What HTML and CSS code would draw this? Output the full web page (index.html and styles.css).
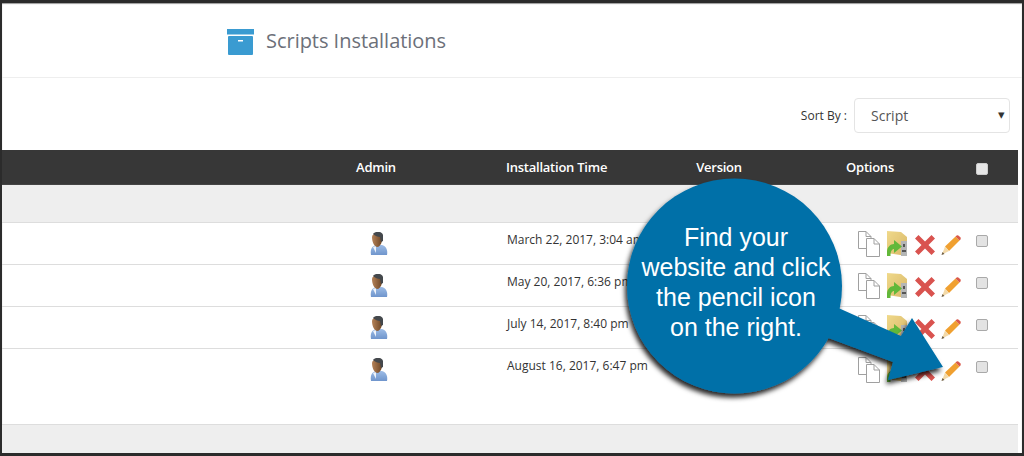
FILE: index.html
```html
<!DOCTYPE html>
<html lang="en">
<head>
<meta charset="utf-8">
<title>Scripts Installations</title>
<link rel="stylesheet" href="styles.css">
</head>
<body>
<svg class="defs" width="0" height="0" aria-hidden="true">
  <defs>
    <linearGradient id="fold" x1="0" y1="0" x2="1" y2="1"><stop offset="0" stop-color="#f0d98a"/><stop offset="1" stop-color="#d8b768"/></linearGradient>
    <linearGradient id="shirt" x1="0" y1="0" x2="0" y2="1"><stop offset="0" stop-color="#9dbce6"/><stop offset="1" stop-color="#6f95cc"/></linearGradient>
    <linearGradient id="face" x1="0" y1="0" x2="1" y2="0"><stop offset="0" stop-color="#b58258"/><stop offset="1" stop-color="#6d4626"/></linearGradient>
    <symbol id="i-user" viewBox="0 0 18 24">
      <path d="M1 23 C0 17 2 14 6 13 L12 13 C16 14 18 18 17 23 Z" fill="url(#shirt)"/>
      <path d="M3 15 L6 14 L6 21 Z" fill="#eef3fa"/>
      <path d="M2 5 C2 1 10 0 11 5 L12 9 C11 13 9 15 7 15 C4 14 2 10 2 5 Z" fill="url(#face)"/>
      <path d="M3 2 C5 -1 12 -1 13 3 L13 9 L11 10 L10 5 C8 5 5 4 3 2 Z" fill="#44484c"/>
    </symbol>
    <symbol id="i-copy" viewBox="0 0 22 26">
      <path d="M.5.5 H8 L13 5.5 V17.5 H.5 Z" fill="#fff" stroke="#a0a0a0"/>
      <path d="M8.500 7.500 H16 L21.500 13 V25.500 H8.500 Z" fill="#fff" stroke="#a0a0a0"/>
      <path d="M8 .5 V5.500 H13 M16 7.500 V13 H21.500" fill="none" stroke="#a0a0a0"/>
    </symbol>
    <symbol id="i-folder" viewBox="0 0 20 25">
      <path d="M0 0 L14 1 L20 6 V25 L0 22 Z" fill="url(#fold)"/>
      <path d="M14 10 H20 V25 H14 Z" fill="#b4b6b6"/>
      <path d="M16 13 H18 V16 H16 Z M15 19 H19 V21 H15 Z" fill="#555"/>
      <path d="M0 25 C-1 18 2 13 7 13 V9 L15 15.500 L7 22 V18 C5 18 3.500 20 3.500 25 Z" fill="#62b83a"/>
    </symbol>
    <symbol id="i-delete" viewBox="0 0 20 20">
      <path d="M0 3.500 L3.500 0 L10 6.500 L16.500 0 L20 3.500 L13.500 10 L20 16.500 L16.500 20 L10 13.500 L3.500 20 L0 16.500 L6.500 10 Z" fill="#d9534f"/>
    </symbol>
    <symbol id="i-pencil" viewBox="0 0 20 20">
      <path d="M4 11.500 L14.500 1.500 L18.500 5.500 L8 16 Z" fill="#f0a030"/>
      <path d="M4 11.500 L8 16 L1 19.500 Z" fill="#f3d9a8"/>
      <path d="M.5 20 L1.500 17 L3.500 19 Z" fill="#6b5a40"/>
      <path d="M14.500 1.500 L16 .3 Q17 0 18 1 L19.500 2.500 Q20 3.500 19.500 4.500 L18.500 5.500 Z" fill="#d9584a"/>
    </symbol>
  </defs>
</svg>
<main class="frame">
  <header class="page-head">
    <svg class="box-icon" viewBox="0 0 27 26" aria-hidden="true">
      <rect x="0" y="0" width="27" height="5.500" fill="#3a9bd1"/>
      <rect x="1" y="7" width="25" height="19" rx="1" fill="#3a9bd1"/>
      <rect x="11" y="11" width="5" height="1.500" fill="#fff"/>
    </svg>
    <h1 class="page-title">Scripts Installations</h1>
  </header>
  <div class="sort-bar">
    <span class="sort-label">Sort By :</span>
    <div class="sort-select">Script<span class="caret">▾</span></div>
  </div>
  <div class="row head-row">
    <span></span>
    <span class="cell-center">Admin</span>
    <span class="cell-time">Installation Time</span>
    <span class="cell-center">Version</span>
    <span class="cell-center">Options</span>
    <span class="cell-center"><i class="check check-head"></i></span>
  </div>
  <div class="band"></div>
  <div class="row data-row">
    <span></span>
    <span class="cell-center"><svg class="user"><use href="#i-user"/></svg></span>
    <span class="cell-time">March 22, 2017, 3:04 am</span>
    <span></span>
    <span class="actions"><svg class="a-copy"><use href="#i-copy"/></svg><svg class="a-folder"><use href="#i-folder"/></svg><svg class="a-del"><use href="#i-delete"/></svg><svg class="a-pen"><use href="#i-pencil"/></svg></span>
    <span class="cell-center"><i class="check"></i></span>
  </div>
  <div class="row data-row">
    <span></span>
    <span class="cell-center"><svg class="user"><use href="#i-user"/></svg></span>
    <span class="cell-time">May 20, 2017, 6:36 pm</span>
    <span></span>
    <span class="actions"><svg class="a-copy"><use href="#i-copy"/></svg><svg class="a-folder"><use href="#i-folder"/></svg><svg class="a-del"><use href="#i-delete"/></svg><svg class="a-pen"><use href="#i-pencil"/></svg></span>
    <span class="cell-center"><i class="check"></i></span>
  </div>
  <div class="row data-row">
    <span></span>
    <span class="cell-center"><svg class="user"><use href="#i-user"/></svg></span>
    <span class="cell-time">July 14, 2017, 8:40 pm</span>
    <span></span>
    <span class="actions"><svg class="a-copy"><use href="#i-copy"/></svg><svg class="a-folder"><use href="#i-folder"/></svg><svg class="a-del"><use href="#i-delete"/></svg><svg class="a-pen"><use href="#i-pencil"/></svg></span>
    <span class="cell-center"><i class="check"></i></span>
  </div>
  <div class="row data-row last-row">
    <span></span>
    <span class="cell-center"><svg class="user"><use href="#i-user"/></svg></span>
    <span class="cell-time">August 16, 2017, 6:47 pm</span>
    <span></span>
    <span class="actions"><svg class="a-copy"><use href="#i-copy"/></svg><svg class="a-folder"><use href="#i-folder"/></svg><svg class="a-del"><use href="#i-delete"/></svg><svg class="a-pen"><use href="#i-pencil"/></svg></span>
    <span class="cell-center"><i class="check"></i></span>
  </div>
  <div class="band foot-band"></div>
</main>
<svg class="callout" viewBox="0 0 1024 456" aria-hidden="true">
  <defs>
    <filter id="drop" x="-20%" y="-20%" width="140%" height="140%">
      <feDropShadow dx="-2" dy="4" stdDeviation="2.500" flood-color="#000" flood-opacity=".85"/>
    </filter>
  </defs>
  <g filter="url(#drop)" fill="#0070a8">
    <circle cx="734.500" cy="286" r="107.500"/>
    <path d="M825 302 L901 336 L912 318 L943 367 L888 380 L893 362 L815 333 Z"/>
  </g>
</svg>
<p class="callout-text">Find your<br>website and click<br>the pencil icon<br>on the right.</p>
</body>
</html>
```
FILE: styles.css
```css
* { box-sizing: border-box; }
html, body { margin: 0; padding: 0; background: #fff; }
body { width: 1024px; height: 456px; overflow: hidden; position: relative; font-family: "Open Sans", sans-serif; }
.defs { position: absolute; }
.frame {
  height: 456px;
  border-style: solid;
  border-color: #2b2b2b;
  border-width: 3px 2px 3px 2px;
  box-shadow: inset 0 1px 1px #999;
  padding-right: 4px;
  display: flex;
  flex-direction: column;
}
.page-head {
  height: 75px;
  margin-right: -4px;
  border-bottom: 1px solid #eee;
  padding: 26px 0 0 225px;
  display: flex;
  align-items: flex-start;
  gap: 12px;
  flex: none;
}
.box-icon { width: 27px; height: 26px; flex: none; }
.page-title { margin: -2px 0 0; font-size: 20px; font-weight: 400; line-height: 27px; letter-spacing: -.03px; color: #6c7079; }
.sort-bar {
  height: 72px;
  flex: none;
  display: flex;
  align-items: flex-start;
  justify-content: flex-end;
  padding: 20px 8px 0 0;
}
.sort-label { font-size: 12px; line-height: 35px; color: #333; margin-right: 7px; }
.sort-select {
  width: 156px;
  height: 35px;
  border: 1px solid #e4e4e4;
  border-radius: 4px;
  padding-left: 16px;
  font-size: 14px;
  line-height: 34px;
  color: #555;
  display: flex;
  justify-content: space-between;
}
.caret { color: #333; font-size: 13px; line-height: 30px; margin-right: 4px; }
.row {
  display: grid;
  grid-template-columns: 334px 80px 244px 118px 184px 40px 1fr;
  align-items: center;
  flex: none;
}
.head-row {
  height: 35px;
  background: #373737;
  border-bottom: 1px solid #444;
  color: #fff;
  font-size: 13px;
  font-weight: 600;
  letter-spacing: -.24px;
}
.cell-center { display: flex; justify-content: center; align-items: center; }
.cell-time { padding-left: 90px; }
.check {
  display: block;
  width: 12px;
  height: 12px;
  background: #e3e3e3;
  border: 1px solid #a9a9a9;
  border-radius: 2px;
}
.check-head { background: #e6e6e6; border-color: #ccc; margin-top: 3px; }
.band {
  height: 38px;
  background: #eeeeee;
  border-bottom: 1px solid #dddddd;
  flex: none;
}
.foot-band { flex: 1; border-bottom: 0; border-top: 1px solid #dddddd; height: auto; }
.data-row {
  height: 42px;
  border-bottom: 1px solid #dddddd;
  align-items: start;
  font-size: 12px;
  color: #333;
}
.data-row .cell-time { padding: 8px 0 0 91px; line-height: 17px; }
.data-row .cell-center { padding-top: 9px; }
.data-row .cell-center .check { margin-top: 3px; }
.user { width: 18px; height: 24px; display: block; margin-left: 6px; filter: blur(.35px); }
.last-row { height: 75px; border-bottom: 0; }
.actions { display: flex; align-items: flex-start; padding: 8px 0 0 80px; }
.actions svg { display: block; flex: none; filter: blur(.35px); }
.a-copy { width: 22px; height: 26px; margin-right: 7px; }
.a-folder { width: 20px; height: 25px; margin-right: 8px; }
.a-del { width: 20px; height: 20px; margin: 4px 6px 0 0; }
.a-pen { width: 20px; height: 20px; margin-top: 4px; }
.callout { position: absolute; left: 0; top: 0; width: 1024px; height: 456px; pointer-events: none; }
.callout-text {
  position: absolute;
  left: 630px;
  top: 222px;
  width: 212px;
  margin: 0;
  text-align: center;
  font-family: "Liberation Sans", Arial, sans-serif;
  font-size: 25px;
  line-height: 30px;
  color: #fff;
}
```
